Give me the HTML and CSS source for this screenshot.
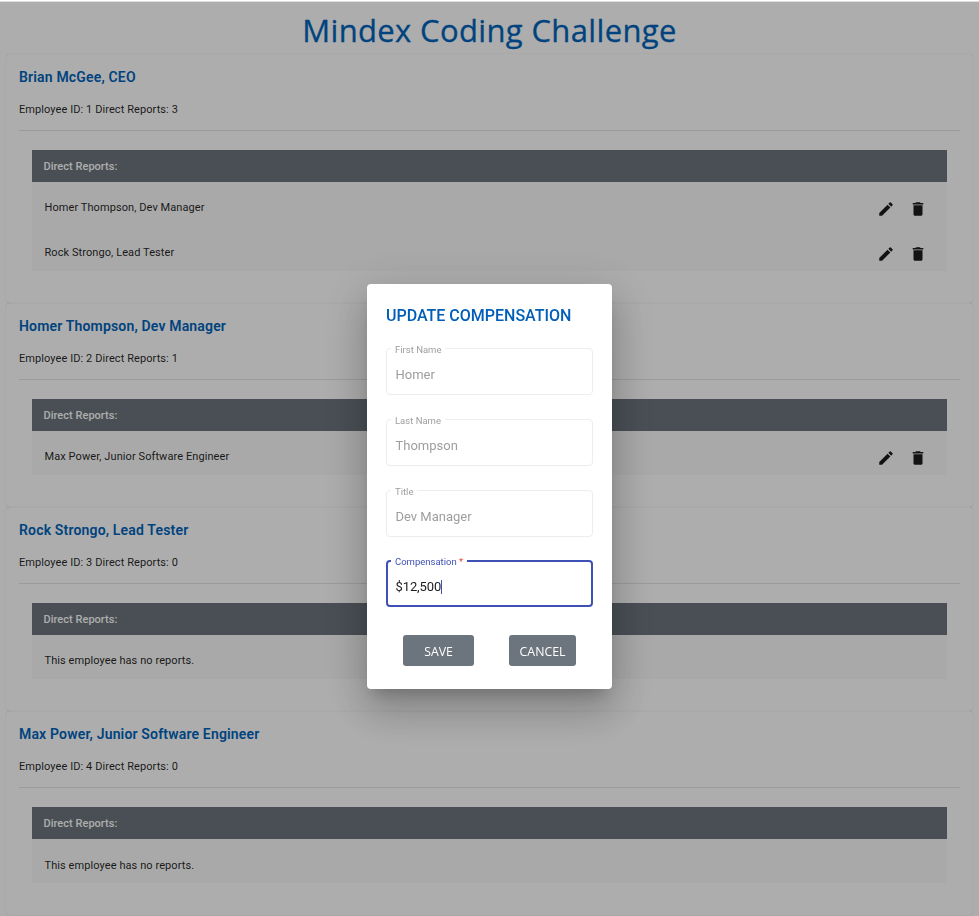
FILE: index.html
```html
<!DOCTYPE html>
<html lang="en">
<head>
<meta charset="utf-8">
<title>Mindex Coding Challenge</title>
<link rel="stylesheet" href="styles.css">
</head>
<body>
<svg width="0" height="0" class="defs">
  <symbol id="edit" viewBox="0 0 24 24"><path d="M3 17.25V21h3.75L17.81 9.94l-3.75-3.75L3 17.25zM20.71 7.04a1 1 0 0 0 0-1.41l-2.34-2.34a1 1 0 0 0-1.41 0l-1.83 1.83 3.75 3.75 1.83-1.83z"/></symbol>
  <symbol id="delete" viewBox="0 0 24 24"><path d="M6 19c0 1.100.9 2 2 2h8c1.100 0 2-.9 2-2V7H6v12zM19 4h-3.500l-1-1h-5l-1 1H5v2h14V4z"/></symbol>
</svg>
<main class="page">
  <h1 class="title"><span>Mindex Coding Challenge</span></h1>
  <section class="card">
    <h2 class="name"><span>Brian McGee, CEO</span></h2>
    <p class="meta"><span>Employee ID: 1 Direct Reports: 3</span></p>
    <div class="reports">
      <div class="head"><span>Direct Reports:</span></div>
      <div class="row"><span>Homer Thompson, Dev Manager</span><div class="icons"><svg><use href="#edit"/></svg><svg><use href="#delete"/></svg></div></div>
      <div class="row"><span>Rock Strongo, Lead Tester</span><div class="icons"><svg><use href="#edit"/></svg><svg><use href="#delete"/></svg></div></div>
    </div>
  </section>
  <section class="card">
    <h2 class="name"><span>Homer Thompson, Dev Manager</span></h2>
    <p class="meta"><span>Employee ID: 2 Direct Reports: 1</span></p>
    <div class="reports">
      <div class="head"><span>Direct Reports:</span></div>
      <div class="row"><span>Max Power, Junior Software Engineer</span><div class="icons"><svg><use href="#edit"/></svg><svg><use href="#delete"/></svg></div></div>
    </div>
  </section>
  <section class="card">
    <h2 class="name"><span>Rock Strongo, Lead Tester</span></h2>
    <p class="meta"><span>Employee ID: 3 Direct Reports: 0</span></p>
    <div class="reports">
      <div class="head"><span>Direct Reports:</span></div>
      <div class="row"><span>This employee has no reports.</span></div>
    </div>
  </section>
  <section class="card">
    <h2 class="name"><span>Max Power, Junior Software Engineer</span></h2>
    <p class="meta"><span>Employee ID: 4 Direct Reports: 0</span></p>
    <div class="reports">
      <div class="head"><span>Direct Reports:</span></div>
      <div class="row empty"><span>This employee has no reports.</span></div>
    </div>
  </section>
</main>
<div class="backdrop"></div>
<form class="dialog">
  <h2 class="dialog-title"><span>UPDATE COMPENSATION</span></h2>
  <fieldset class="field"><legend>First Name</legend><span>Homer</span></fieldset>
  <fieldset class="field"><legend>Last Name</legend><span>Thompson</span></fieldset>
  <fieldset class="field"><legend>Title</legend><span>Dev Manager</span></fieldset>
  <fieldset class="field active"><legend>Compensation <b>*</b></legend><span>$12,500</span><i class="caret"></i></fieldset>
  <div class="actions"><button type="button" class="save">SAVE</button><button type="button" class="cancel">CANCEL</button></div>
</form>
</body>
</html>
```
FILE: styles.css
```css
* { box-sizing: border-box; }
html, body { margin: 0; height: 916px; overflow: hidden; background: #fff; }
body { font-family: Roboto, "Liberation Sans", sans-serif; color: rgba(0,0,0,.87); }
.defs { position: absolute; }
.page { padding: 0 6px; }
.title { margin: 0; height: 54px; padding-top: 7px; text-align: center; font: 400 31px/46px "Open Sans", "Noto Sans", sans-serif; color: #0064ba; letter-spacing: .36px; -webkit-text-stroke: .3px #0064ba; }
.card { padding: 0 13px 31.5px; border-radius: 4px; box-shadow: 0 0 1px rgba(0,0,0,.24); }
.name { margin: 0; padding-top: 13px; height: 45px; font-size: 14px; line-height: 20px; font-weight: 600; color: #0064ba; letter-spacing: .17px; }
.meta { margin: 0; height: 32px; padding-top: 1px; font-size: 11px; line-height: 20px; font-weight: 400; letter-spacing: .08px; border-bottom: 1px solid rgba(0,0,0,.1); }
.reports { margin: 19px 13px 0; background: #f9f9f9; }
.head { height: 32px; padding: 1px 0 0 11.5px; background: #6c757d; color: #fff; font-size: 11px; line-height: 32px; font-weight: 500; letter-spacing: .03px; }
.row { height: 44.5px; padding: 1px 20px 0 12.5px; display: flex; justify-content: space-between; font-size: 11px; line-height: 50px; letter-spacing: .08px; }
.empty { line-height: 51px; }
.icons { display: flex; gap: 14px; padding-top: 17px; margin-right: -.4px; }
.icons svg { width: 18px; height: 18px; fill: #1c1c1c; }
.backdrop { position: fixed; inset: 1px 0 0; background: rgba(0,0,0,.32); border-top: 1px solid rgba(255,255,255,.6); }
.dialog { position: fixed; left: 367px; top: 284px; width: 245px; height: 405px; padding: 0 19px; background: #fff; border-radius: 4px; box-shadow: 0 11px 15px -7px rgba(0,0,0,.2), 0 24px 38px 3px rgba(0,0,0,.14), 0 9px 46px 8px rgba(0,0,0,.12); }
.dialog-title { margin: 0; height: 59px; padding-top: 22px; font-size: 16px; line-height: 20px; font-weight: 500; color: #005eb8; }
.field { display: flex; align-items: center; margin: 0 0 18.75px; padding: 2px 8.5px 0; height: 52px; border: 1px solid #ededed; border-radius: 4px; color: #9e9e9e; font-size: 13px; line-height: 20px; }
.field legend { position: relative; top: 1px; margin-left: -4.5px; padding: 0 4px; font-size: 9.500px; line-height: 11px; }
.field.active { border: 2px solid #3f51b5; padding: 2px 7.5px 0; color: #212121; letter-spacing: -.1px; }
.active legend { color: #3f51b5; letter-spacing: 0; }
.active b { color: #f44336; font-weight: 400; }
.caret { width: 1px; height: 14px; background: #3f51b5; }
.actions { display: flex; gap: 35px; margin-left: 17px; margin-top: 28px; }
.actions button { height: 31px; padding: 2px 0 0; border: 0; border-radius: 3px; background: #6c757d; color: #fff; font: 400 12.3px/29px "Open Sans", sans-serif; }
.save { width: 71px; }
.cancel { width: 67px; }
```
